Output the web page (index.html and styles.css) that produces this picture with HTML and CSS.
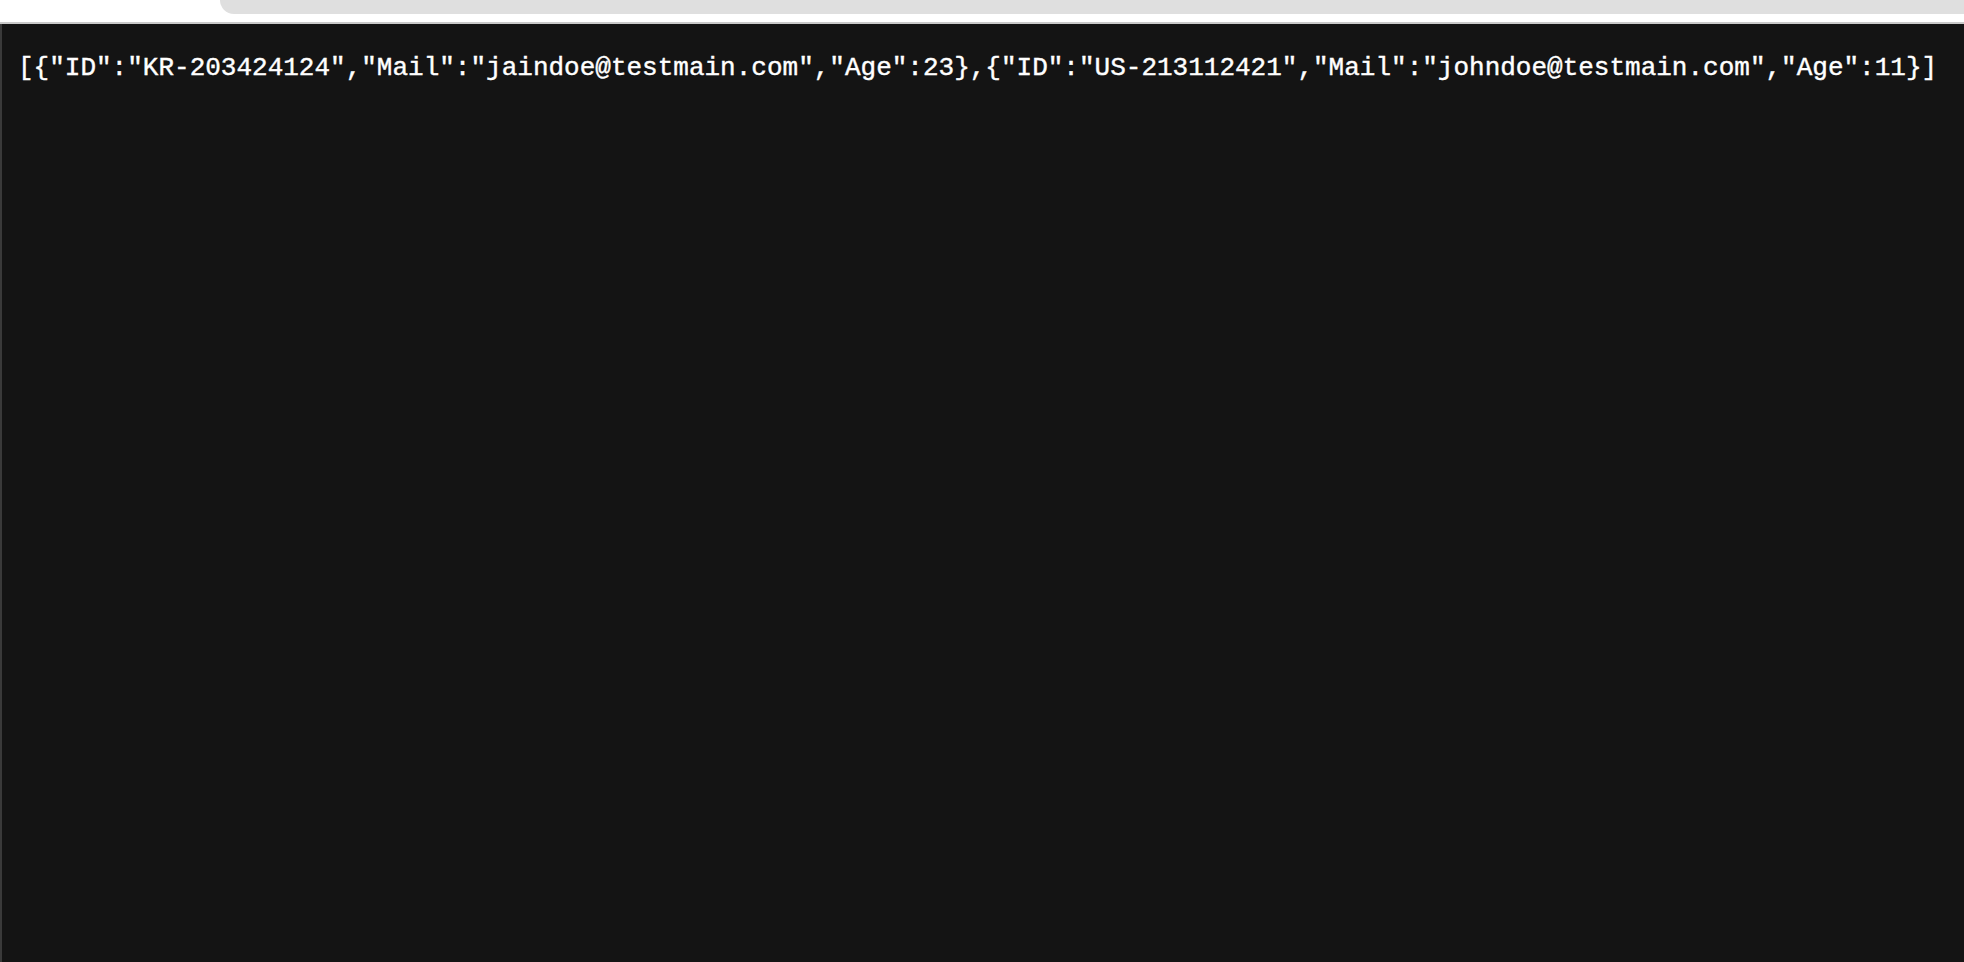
FILE: index.html
```html
<!DOCTYPE html>
<html>
<head>
<meta charset="utf-8">
<link rel="stylesheet" href="styles.css">
</head>
<body>
<div class="chrome">
  <div class="chrome-bar"></div>
</div>
<div class="viewport">
<pre class="json">[{"ID":"KR-203424124","Mail":"jaindoe@testmain.com","Age":23},{"ID":"US-213112421","Mail":"johndoe@testmain.com","Age":11}]</pre>
</div>
</body>
</html>
```
FILE: styles.css
```css
html, body {
  margin: 0;
  padding: 0;
  height: 100%;
  background: #141414;
}
body {
  display: flex;
  flex-direction: column;
}
.chrome {
  height: 22px;
  background: #ffffff;
  border-bottom: 2px solid #c9c9c9;
  display: flex;
  justify-content: flex-end;
  flex: none;
}
.chrome-bar {
  width: calc(100% - 220px);
  height: 14px;
  background: #dfdfdf;
  border-bottom-left-radius: 14px;
}
.viewport {
  flex: 1;
  background: #141414;
  border-left: 2px solid #3a3a3a;
  padding: 29px 16px 26px;
}
.json {
  margin: 0;
  font-family: "Liberation Mono", "Courier New", monospace;
  font-size: 26px;
  line-height: 30px;
  color: #ffffff;
  white-space: pre;
  -webkit-text-stroke: 0.4px #ffffff;
}
```
